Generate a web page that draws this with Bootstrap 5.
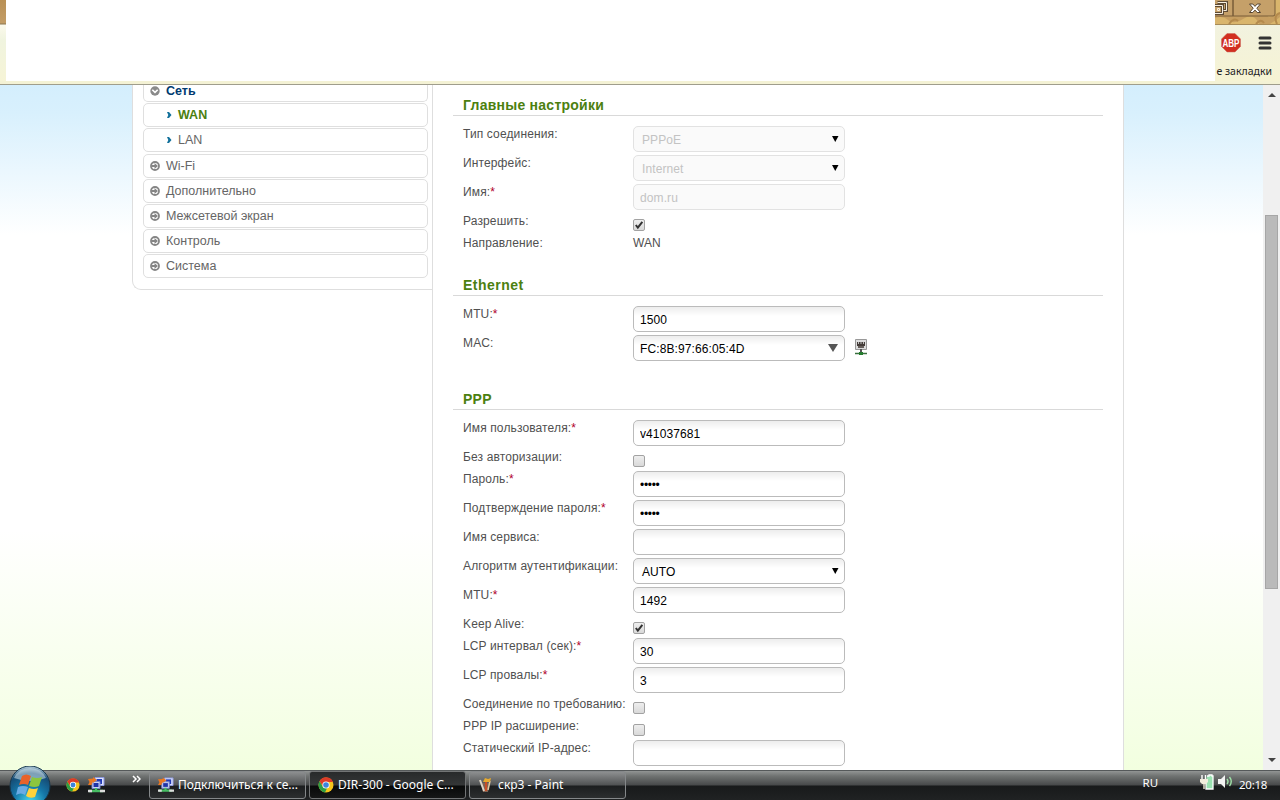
<!DOCTYPE html>
<html lang="ru">
<head>
    <meta charset="UTF-8">
    <meta name="viewport" content="width=device-width, initial-scale=1.0">
    <title>DIR-300</title>
    <link rel="stylesheet" href="https://cdn.jsdelivr.net/npm/bootstrap@5.3.0/dist/css/bootstrap.min.css">
    <style>
        body { width: 1280px; height: 800px; font: 12px/18px "Liberation Sans", Arial, sans-serif; color: #505050; background: #fff; }
        svg { display: block; flex: none; }

        /* browser frame */
        .chrome-top { height: 85px; padding-bottom: 3px; background: #f4f2d5; border-bottom: 1px solid #9f9d8c; }
        .frame-left { width: 6px; background: linear-gradient(#b99055 0, #c39d66 23px, #8b7750 24px, #fbf9ec 25px, #f0f4df 40px, #f6f4d6); }
        .frame-right { width: 65px; background: linear-gradient(#f0f2e5, #f6f3d3); }
        .caption-bar { height: 25px; background: #c69e61; border-bottom: 1px solid #a78b58; }
        .bookmarks { font: 10.5px/14px "Noto Sans", sans-serif; color: #222; padding-right: 8px; margin-top: 11px; }

        /* router page */
        .viewport { height: 685px; }
        .site { background: linear-gradient(#d4eefd 0, #d8f0fd 28px, #fff 150px, #fff 445px, #f5ffe6 640px, #f2ffdf 100%); }
        .side { width: 300px; height: 205px; margin-left: 132px; background: #fff; border: 1px solid #dedede; border-top: 0; border-right: 0; border-bottom-left-radius: 9px; padding-left: 10px; }
        .side a { display: flex; align-items: center; width: 285px; height: 24px; margin-bottom: 1px; border: 1px solid #dfdfdf; border-radius: 5px; padding-left: 6px; color: #666; text-decoration: none; font-size: 12.5px; }
        .side svg { margin-right: 6px; }
        .side .first-item { height: 17px; border-top: 0; border-radius: 0 0 5px 5px; padding-bottom: 4px; color: #003a70; font-weight: bold; }
        .side .sub-item { padding-left: 21px; }
        .side .sub-item svg { margin-right: 5px; }
        .side .sub-item.active { color: #4c8010; font-weight: bold; }
        .side .last-sub { margin-bottom: 2px; }
        .content { width: 692px; background: #fff; border: solid #dedede; border-width: 0 1px; padding: 11px 20px 0; }
        h2 { font: bold 14px/18px "Liberation Sans", Arial, sans-serif; letter-spacing: .25px; color: #4c8010; height: 20px; margin: 0 0 9px; padding-left: 10px; border-bottom: 1px solid #d9d9d9; }
        .h-eth { margin-top: 20px; letter-spacing: .5px; }
        .h-ppp { margin-top: 27px; }
        .frow { display: flex; height: 29px; padding-left: 10px; }
        .frow.short { height: 22px; }
        .frow > label, .frow > .cap { width: 170px; white-space: nowrap; letter-spacing: .13px; }
        .frow i { color: #b0002a; font-style: normal; }
        .field { width: 212px; height: 26px; margin-top: 1px; padding: 2px 6px 0; border: 1px solid #bbb; border-radius: 5px; background: linear-gradient(#ededed, #fff 9px); color: #000; font-size: 12px; letter-spacing: .1px; }
        .field[type=password] { letter-spacing: -.3px; }
        .drop { display: flex; align-items: center; justify-content: space-between; padding-left: 8px; padding-right: 5px; }
        .drop svg { margin-top: -3px; }
        .drop.mac { padding-left: 6px; padding-right: 6px; }
        .field.off { color: #c3c3c3; border-color: #e2e2e2; background: #fafafa; }
        .tick { appearance: none; width: 12px; height: 12px; margin: 7px 0 0; border: 1px solid #a2a2a2; border-radius: 2px; background: linear-gradient(#eee, #d9d9d9); }
        .tick:checked { background: url("data:image/svg+xml,%3csvg xmlns='http://www.w3.org/2000/svg' viewBox='0 0 11 11'%3e%3cpath d='M2 5.5l2.2 2.8L9.2 2' fill='none' stroke='%23333' stroke-width='2.2'/%3e%3c/svg%3e"), linear-gradient(#eee, #d9d9d9); }
        .scroller { width: 17px; background: #f0f0f0; }
        .thumb { width: 13px; height: 374px; margin-top: 118px; background: #bababa; border: 1px solid #a6a6a6; }

        /* taskbar */
        .taskbar { height: 30px; font: 12px/16px "Noto Sans", sans-serif; color: #fff; border-top: 1px solid #55595a; background: linear-gradient(#929594 0, #707372 5px, #47494a 14px, #181a1b 15px, #202223 100%); }
        .orb { width: 48px; height: 34px; margin-left: 6px; margin-top: -5px; }
        .quick { margin-left: 12px; }
        .quick-more { margin-left: 27px; margin-right: 8px; }
        .task { width: 157px; height: 28px; margin-right: 3px; padding-left: 8px; border: 1px solid #85888a; border-radius: 3px; background: linear-gradient(#8d8f90, #505253 13px, #1c1e1f 14px, #2c2e2f); }
        .task.current { background: linear-gradient(#282a2b, #343637 13px, #080909 14px, #161717); border-color: #737576; }
        .task svg { margin-right: 4px; }
        .tray { padding-top: 4px; padding-right: 13px; }
        .tray svg { margin-top: -1px; }
        .lang { margin-right: 42px; font-size: 11.5px; }
        .clock { margin-left: 7px; padding-top: 2px; font-size: 11.5px; letter-spacing: -.3px; }
    </style>
</head>
<body class="overflow-hidden">
    <svg width="0" height="0" class="position-absolute">
        <defs>
            <radialGradient id="orbfill" cx=".5" cy=".9" r=".9"><stop offset="0" stop-color="#46d9ee"/><stop offset=".45" stop-color="#1577a8"/><stop offset=".8" stop-color="#164b74"/><stop offset="1" stop-color="#bdd5e2"/></radialGradient>
            <symbol id="ring" viewBox="0 0 10 10"><circle cx="5" cy="5" r="4" fill="#fff" stroke="#858585" stroke-width="1.800"/><path d="M2 4h2.500V2L8 5 4.500 8V6H2z" fill="#858585"/></symbol>
            <symbol id="ringdown" viewBox="0 0 10 10"><circle cx="5" cy="5" r="4.700" fill="#8a8a8a"/><path d="M2.300 3.700L5 6.400l2.700-2.700" fill="none" stroke="#fff" stroke-width="1.600"/></symbol>
            <symbol id="chev" viewBox="0 0 6 8"><path d="M1 1h2l2.500 3L3 7H1l1.300-3z" fill="#13719b"/></symbol>
            <symbol id="chrome" viewBox="0 0 16 16">
                <circle cx="8" cy="8" r="7.500" fill="#f5c51c"/>
                <path d="M1.500 4.200A7.500 7.500 0 0 1 15 5H8L5 9.500z" fill="#dc3b28"/>
                <path d="M1.500 4.200L5 10l4 1.300L7 15.400A7.500 7.500 0 0 1 1.500 4.200z" fill="#2c9e45"/>
                <circle cx="8" cy="8" r="3.600" fill="#fff"/><circle cx="8" cy="8" r="2.800" fill="#3c84dc"/>
            </symbol>
            <symbol id="netcon" viewBox="0 0 17 16">
                <path d="M7 .5h9v8H7z" fill="#dce2ff" stroke="#8e99dc"/><path d="M8.500 2H14v5H8.500z" fill="#223ab6"/>
                <path d="M4 4.500h8v7H4z" fill="#cbd3f8" stroke="#7581c9"/><path d="M5.500 6h5v4h-5z" fill="#2032a5"/>
                <path d="M0 2l5-.5V0l4 3-4 3V4.500L3.500 8H0l1.500-3z" fill="#e87722"/><path d="M8 11v3M1 14h14" stroke="#47bd63" stroke-width="2.300"/><path d="M0 14h4M12 14h5" stroke="#ddd" stroke-width="2.500"/>
            </symbol>
        </defs>
    </svg>

    <header class="chrome-top d-flex">
        <div class="frame-left"></div>
        <div class="bg-white flex-grow-1"></div>
        <div class="frame-right">
            <div class="caption-bar">
                <svg width="65" height="24" viewBox="0 0 65 24">
                    <path d="M0 18q8-3 13 2t15-1 15 3 22-5v7H0zM50 0h15v12q-7 6-12 5z" fill="#d9b56c"/>
                    <path d="M14 24q5-7 9-3M41 24q5-6 8-1M62 24q-4-9 3-11" fill="none" stroke="#b48a4c" stroke-width="2"/>
                    <path d="M-4-4h22v20H-4zM18-4h42v18q0 2-2 2H18z" fill="#c5a069" stroke="#785c38"/>
                    <path d="M2.500 2.500h9v8h-3M-1.500 5.500h9v8h-9z" fill="#c5a069" stroke="#5d4a34" stroke-width="3"/>
                    <path d="M2.500 2.500h9v8h-3M-1.500 5.500h9v8h-9zM2.500 8.500h2v2h-2z" fill="none" stroke="#f7efe1"/>
                    <path d="M34.500 4h3.300l2.200 2.400L42.200 4h3.300l-3.700 4.200 3.700 4.300h-3.300L40 10.100l-2.200 2.400h-3.300l3.700-4.300z" fill="#fff" stroke="#54432f"/>
                </svg>
            </div>
            <div class="d-flex align-items-center justify-content-between ps-1 pe-2 mt-1 pt-1">
                <svg width="24" height="20" viewBox="0 0 24 20"><path d="M8 .5h8l5.500 5.500v7.500L16 19H8l-5.500-5.500V6z" fill="#d22f20" stroke="#c9695c" stroke-width=".5"/><text x="12" y="13.500" text-anchor="middle" textLength="17" lengthAdjust="spacingAndGlyphs" font-family="Liberation Sans" font-size="10" font-weight="bold" fill="#fff">ABP</text></svg>
                <svg width="14" height="14" viewBox="0 0 14 14"><path d="M2 2h10M2 7h10M2 12h10" stroke="#333" stroke-width="3" stroke-linecap="round"/></svg>
            </div>
            <div class="bookmarks d-flex justify-content-end text-nowrap">е закладки</div>
        </div>
    </header>

    <div class="viewport d-flex overflow-hidden">
        <div class="site d-flex flex-grow-1">
            <nav class="side">
                <a href="#" class="first-item"><svg width="10" height="10"><use href="#ringdown"/></svg>Сеть</a>
                <a href="#" class="sub-item active"><svg width="8" height="8"><use href="#chev"/></svg>WAN</a>
                <a href="#" class="sub-item last-sub"><svg width="8" height="8"><use href="#chev"/></svg>LAN</a>
                <a href="#"><svg width="10" height="10"><use href="#ring"/></svg>Wi-Fi</a>
                <a href="#"><svg width="10" height="10"><use href="#ring"/></svg>Дополнительно</a>
                <a href="#"><svg width="10" height="10"><use href="#ring"/></svg>Межсетевой экран</a>
                <a href="#"><svg width="10" height="10"><use href="#ring"/></svg>Контроль</a>
                <a href="#"><svg width="10" height="10"><use href="#ring"/></svg>Система</a>
            </nav>
            <main class="content">
                <h2>Главные настройки</h2>
                <div class="frow"><span class="cap">Тип соединения:</span><div class="field drop off">PPPoE<svg width="8" height="8"><path d="M1 1h6.500L4.250 7z"/></svg></div></div>
                <div class="frow"><span class="cap">Интерфейс:</span><div class="field drop off">Internet<svg width="8" height="8"><path d="M1 1h6.500L4.250 7z"/></svg></div></div>
                <div class="frow"><label for="conn">Имя:<i>*</i></label><input class="field off" id="conn" value="dom.ru" disabled></div>
                <div class="frow short"><label for="enable">Разрешить:</label><input type="checkbox" class="tick" id="enable" checked></div>
                <div class="frow short"><span class="cap">Направление:</span><span>WAN</span></div>

                <h2 class="h-eth">Ethernet</h2>
                <div class="frow"><label for="mtu1">MTU:<i>*</i></label><input class="field" id="mtu1" value="1500"></div>
                <div class="frow"><span class="cap">MAC:</span><div class="field drop mac">FC:8B:97:66:05:4D<svg width="10" height="8"><path d="M0 0h10L5 8z" fill="#555"/></svg></div>
                    <svg class="ms-2 mt-1" width="16" height="18" viewBox="0 0 16 18"><path d="M2.500 1.500h11v10h-11z" fill="#ddd" stroke="#999"/><path d="M4 4h8v4H4z" fill="#443c38"/><path d="M5.500 4v2M8 4v2M10.500 4v2" stroke="#bbb"/><path d="M5 8h6v2H5z" fill="#665f5b"/><path d="M8 11v4" stroke="#555" stroke-width="2"/><path d="M2 15.500h12" stroke="#3a713f" stroke-width="1.500"/><path d="M6 14h4v3H6z" fill="#247b2d"/></svg>
                </div>

                <h2 class="h-ppp">PPP</h2>
                <div class="frow"><label for="user">Имя пользователя:<i>*</i></label><input class="field" id="user" value="v41037681"></div>
                <div class="frow short"><label for="noauth">Без авторизации:</label><input type="checkbox" class="tick" id="noauth"></div>
                <div class="frow"><label for="pw1">Пароль:<i>*</i></label><input type="password" class="field" id="pw1" value="admin"></div>
                <div class="frow"><label for="pw2">Подтверждение пароля:<i>*</i></label><input type="password" class="field" id="pw2" value="admin"></div>
                <div class="frow"><label for="service">Имя сервиса:</label><input class="field" id="service"></div>
                <div class="frow"><span class="cap">Алгоритм аутентификации:</span><div class="field drop">AUTO<svg width="8" height="8"><path d="M1 1h6.500L4.250 7z"/></svg></div></div>
                <div class="frow"><label for="mtu2">MTU:<i>*</i></label><input class="field" id="mtu2" value="1492"></div>
                <div class="frow short"><label for="keep">Keep Alive:</label><input type="checkbox" class="tick" id="keep" checked></div>
                <div class="frow"><label for="lcp1">LCP интервал (сек):<i>*</i></label><input class="field" id="lcp1" value="30"></div>
                <div class="frow"><label for="lcp2">LCP провалы:<i>*</i></label><input class="field" id="lcp2" value="3"></div>
                <div class="frow short"><label for="demand">Соединение по требованию:</label><input type="checkbox" class="tick" id="demand"></div>
                <div class="frow short"><label for="pppext">PPP IP расширение:</label><input type="checkbox" class="tick" id="pppext"></div>
                <div class="frow"><label for="static">Статический IP-адрес:</label><input class="field" id="static"></div>
            </main>
        </div>
        <div class="scroller d-flex flex-column align-items-center">
            <svg class="mt-2" width="8" height="4"><path d="M0 4l4-4 4 4z" fill="#444"/></svg>
            <div class="thumb"></div>
            <svg class="mt-auto mb-2" width="8" height="4"><path d="M0 0h8L4 4z" fill="#444"/></svg>
        </div>
    </div>

    <footer class="taskbar d-flex align-items-start">
        <svg class="orb" viewBox="0 0 48 34">
            <circle cx="24" cy="20" r="20" fill="url(#orbfill)" stroke="#17384d"/>
            <path d="M8 12Q13 2 24 2t16 10q-16 6-32 0z" fill="#d6e5ed" opacity=".55"/>
            <path d="M16 10q4-3 9 0l-3 9q-4-2-9 0z" fill="#e8632a"/><path d="M26 11q5 2 10 0l-3 9q-4 2-10 0z" fill="#8cc63e"/>
            <path d="M12 21q5-2 10 0l-3 8q-4-3-9 0z" fill="#69abe4"/><path d="M23 22q5 2 9 0l-3 9q-5 2-9-1z" fill="#ffd23c"/>
        </svg>
        <svg class="quick me-2 mt-1" width="14" height="20"><use href="#chrome" y="3" width="14" height="14"/></svg>
        <svg class="mt-1" width="17" height="20"><use href="#netcon" y="2" width="17" height="16"/></svg>
        <svg class="mt-1 quick-more" width="9" height="8"><path d="M1 1l3 3-3 3M5 1l3 3-3 3" fill="none" stroke="#fff" stroke-width="1.500"/></svg>
        <div class="task d-flex align-items-center"><svg width="16" height="16"><use href="#netcon"/></svg>Подключиться к се...</div>
        <div class="task current d-flex align-items-center"><svg width="16" height="16"><use href="#chrome"/></svg>DIR-300 - Google C...</div>
        <div class="task d-flex align-items-center"><svg width="16" height="16" viewBox="0 0 16 16"><path d="M3 6h8l-1 9H5z" fill="#806453"/><path d="M2 3l4 11" stroke="#ddd4c5" stroke-width="2"/><path d="M8 14V5" stroke="#c84d28" stroke-width="2"/><path d="M10 13l2-9" stroke="#e3c9a1" stroke-width="1.500"/><path d="M5 5l2-4 3 1 3-1-1 4z" fill="#e6a92f"/></svg>скр3 - Paint</div>
        <div class="tray d-flex ms-auto">
            <span class="lang">RU</span>
            <svg class="me-1" width="14" height="16" viewBox="0 0 14 16"><path d="M7 2h2V1h3v1h1v13H6V7" fill="#9be2b1" stroke="#fff" stroke-width="1.300"/><path d="M2 1v4M5.500 1v4" stroke="#fff" stroke-width="1.400"/><path d="M0 5h8v3L6 10H2L0 8z" fill="#f2eddc"/><path d="M4 10v5" stroke="#e4dec9" stroke-width="1.500"/></svg>
            <svg width="14" height="16" viewBox="0 0 14 16"><path d="M0 5h3l4-4v13l-4-4H0z" fill="#f3f3f3"/><path d="M9 5q2 2.500 0 5M11.500 3q3.500 4.500 0 9" fill="none" stroke="#9fe2a7" stroke-width="1.400"/></svg>
            <span class="clock">20:18</span>
        </div>
    </footer>
</body>
</html>
